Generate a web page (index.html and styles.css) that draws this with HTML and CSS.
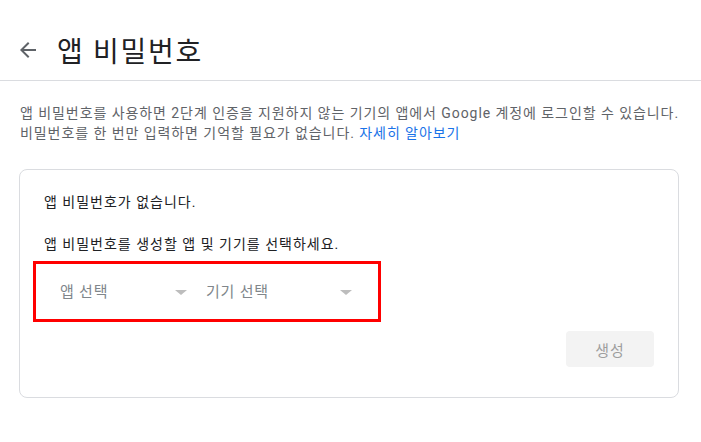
FILE: index.html
```html
<!DOCTYPE html>
<html lang="ko">
<head>
<meta charset="utf-8">
<link rel="stylesheet" href="styles.css">
</head>
<body>
<header class="header">
  <svg class="back" width="24" height="24" viewBox="0 0 24 24"><path d="M20 11H7.83l5.59-5.59L12 4l-8 8 8 8 1.41-1.41L7.83 13H20v-2z" fill="#5f6368"/></svg>
  <h1 class="title">앱 비밀번호</h1>
</header>
<p class="desc">앱 비밀번호를 사용하면 2단계 인증을 지원하지 않는 기기의 앱에서 Google 계정에 로그인할 수 있습니다.<br>비밀번호를 한 번만 입력하면 기억할 필요가 없습니다. <a class="link" href="#">자세히 알아보기</a></p>
<section class="card">
  <p class="line">앱 비밀번호가 없습니다.</p>
  <p class="line second">앱 비밀번호를 생성할 앱 및 기기를 선택하세요.</p>
  <div class="highlight">
    <div class="select app"><span>앱 선택</span><span class="caret"></span></div>
    <div class="select device"><span>기기 선택</span><span class="caret"></span></div>
  </div>
  <div class="actions"><button class="btn">생성</button></div>
</section>
</body>
</html>
```
FILE: styles.css
```css
* { box-sizing: border-box; }
body {
  margin: 0;
  background: #fff;
  font-family: Roboto, "Noto Sans CJK KR", sans-serif;
  color: #202124;
}
.header {
  display: flex;
  align-items: center;
  height: 81px;
  border-bottom: 1px solid #dadce0;
  padding-left: 16px;
  padding-top: 20px;
}
.back { flex: none; }
.title {
  margin: 0 0 0 17px;
  font-size: 28px;
  font-weight: 400;
  color: #202124;
  letter-spacing: 1.7px;
}
.desc {
  margin: 22px 10px 0 20px;
  font-size: 14px;
  line-height: 20px;
  color: #5f6368;
  letter-spacing: 0.93px;
  white-space: nowrap;
}
.link { color: #1a73e8; text-decoration: none; }
.card {
  margin: 26px 22px 0 19px;
  border: 1px solid #dadce0;
  border-radius: 8px;
  padding: 22px 24px 30px 24px;
  height: 229px;
}
.line {
  margin: 0;
  font-size: 14px;
  line-height: 20px;
  color: #202124;
  letter-spacing: 1px;
}
.second { margin-top: 22px; }
.highlight {
  margin: 7px 0 0 -11px;
  width: 348px;
  height: 61px;
  border: 3px solid #f00;
  display: flex;
  align-items: center;
  padding-left: 24px;
}
.select {
  display: flex;
  align-items: center;
  justify-content: space-between;
  font-size: 15px;
  color: #80868b;
  letter-spacing: 0.8px;
  padding-bottom: 2px;
}
.app { width: 127px; margin-right: 19px; }
.device { width: 146px; }
.caret {
  width: 0; height: 0;
  margin-top: 4px;
  border-left: 6px solid transparent;
  border-right: 6px solid transparent;
  border-top: 5px solid #bdbdbd;
}
.actions {
  display: flex;
  justify-content: flex-end;
  margin-top: 9px;
}
.btn {
  width: 88px;
  height: 36px;
  border: none;
  border-radius: 4px;
  background: #f3f3f3;
  color: #9e9e9e;
  font-family: inherit;
  font-size: 15px;
  letter-spacing: 1px;
}
```
